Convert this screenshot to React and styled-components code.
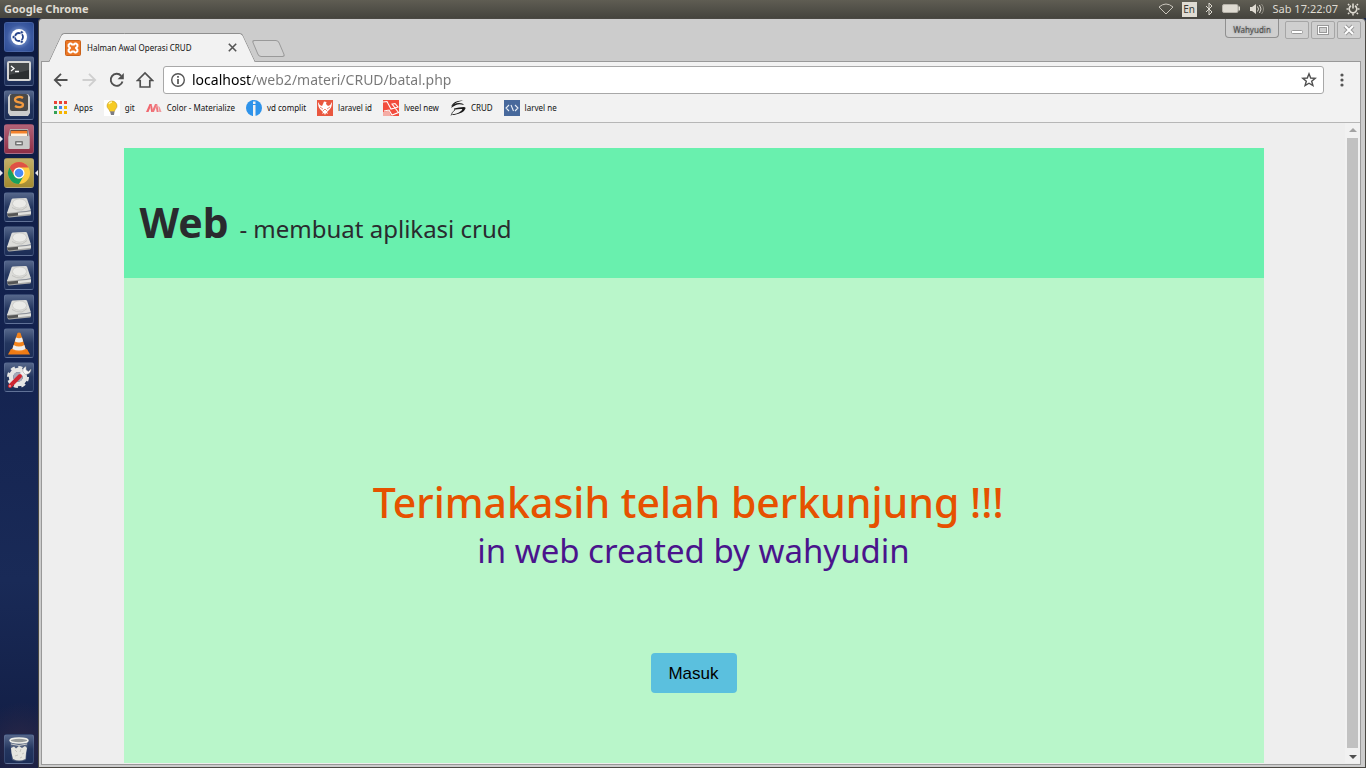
import React from 'react';
import styled, { createGlobalStyle, css } from 'styled-components';

const GlobalStyle = createGlobalStyle`
  * { box-sizing: border-box; }
  html, body { margin: 0; padding: 0; }
  body { font-family: "Noto Sans", "Open Sans", sans-serif; background: #14234a; }
  button, input { font-family: inherit; }
  a { color: inherit; text-decoration: none; }
  svg { display: block; flex: none; }
`;

const Desktop = styled.div`
  display: flex;
  flex-direction: column;
  height: 100vh;
  overflow: hidden;
`;

/* Top panel */
const Panel = styled.header`
  display: flex;
  align-items: center;
  justify-content: space-between;
  flex: none;
  height: 18px;
  padding: 0 6px 0 4px;
  background: linear-gradient(#5f5d53, #45443e);
  color: #dfdbd2;
  font-size: 11px;
  line-height: 16px;
`;

const PanelTitle = styled.strong`
  font-weight: 700;
`;

const Indicators = styled.div`
  display: flex;
  align-items: center;
  gap: 8px;
`;

const Language = styled.span`
  width: 15px;
  height: 15px;
  background: #dfdbd2;
  color: #3c3b37;
  font-size: 10px;
  line-height: 15px;
  text-align: center;
`;

const Clock = styled.time``;

const Workspace = styled.div`
  display: flex;
  flex: 1;
  min-height: 0;
`;

/* Launcher */
const Launcher = styled.nav`
  display: flex;
  flex-direction: column;
  flex: none;
  gap: 4px;
  width: 38px;
  padding: 4px;
  background:
    radial-gradient(circle at 22px 728px, #2b2746 0, transparent 44px),
    linear-gradient(#0d1a40, #142350 45%, #192a57 75%, #111c42);
`;

const Tile = styled.button`
  position: relative;
  display: flex;
  align-items: center;
  justify-content: center;
  flex: none;
  width: 30px;
  height: 30px;
  padding: 0;
  border: 1px solid rgba(140, 160, 200, 0.22);
  border-radius: 3px;
  background: ${(p) => p.$tint || 'linear-gradient(#56678b, #24365f 50%, #1c2d57)'};
  ${(p) => p.$last && css`margin-top: auto;`}
  ${(p) => p.$running && css`
    &::before {
      content: '';
      position: absolute;
      left: -5px;
      top: 11px;
      border: 3px solid transparent;
      border-left-color: #e8e8f0;
      border-right: 0;
    }
  `}
  ${(p) => p.$active && css`
    &::after {
      content: '';
      position: absolute;
      right: -5px;
      top: 11px;
      border: 3px solid transparent;
      border-right-color: #e8e8f0;
      border-left: 0;
    }
  `}
`;

/* Browser window */
const Window = styled.section`
  display: flex;
  flex-direction: column;
  flex: 1;
  min-width: 0;
  padding: 0 4px 2px 2px;
  border: 1px solid #4a4843;
  border-radius: 4px 4px 0 0;
  background: #cccccc;
`;

const TitleBar = styled.div`
  display: flex;
  justify-content: space-between;
  flex: none;
  height: 42px;
  padding-left: 8px;
`;

const TabStrip = styled.div`
  display: flex;
  align-items: flex-end;
`;

const Tab = styled.div`
  position: relative;
  z-index: 1;
  display: flex;
  align-items: center;
  width: 206px;
  height: 29px;
  margin-bottom: -1px;
  padding: 0 16px;
  font-size: 8px;
  line-height: 16px;

  &::before, &::after {
    content: '';
    position: absolute;
    z-index: -1;
    top: 0;
    bottom: 0;
    border-top: 1px solid #8f8f8f;
    background: #f2f2f2;
  }
  &::before {
    left: 6px;
    right: 50%;
    border-left: 1px solid #8f8f8f;
    border-top-left-radius: 3px;
    transform: skewX(-25deg);
  }
  &::after {
    left: 40%;
    right: 6px;
    border-right: 1px solid #8f8f8f;
    border-top-right-radius: 3px;
    transform: skewX(25deg);
  }
`;

const TabTitle = styled.span`
  flex: 1;
  margin-left: 6px;
  color: #111;
  white-space: nowrap;
`;

const IconButton = styled.button`
  display: flex;
  align-items: center;
  justify-content: center;
  flex: none;
  width: ${(p) => p.$size || 20}px;
  height: ${(p) => p.$size || 20}px;
  padding: 0;
  border: 0;
  background: none;
  color: ${(p) => (p.$muted ? '#cfcfcf' : '#505050')};
`;

const NewTab = styled.button`
  width: 27px;
  height: 17px;
  margin: 0 0 4px 0;
  padding: 0;
  border: 1px solid #999;
  border-radius: 3px;
  background: #d2d2d2;
  transform: skewX(23deg);
`;

const WindowControls = styled.div`
  display: flex;
  align-items: flex-start;
  gap: 2px;
`;

const Profile = styled.button`
  width: 54px;
  height: 19px;
  margin-right: 4px;
  padding: 3px 0 0;
  border: 1px solid #909090;
  border-top: 0;
  border-radius: 0 0 4px 4px;
  background: #cfcfcf;
  color: #4c4c4c;
  font-size: 8px;
  line-height: 14px;
  text-shadow: 0 0 2px #777;
`;

const Control = styled.button`
  display: flex;
  align-items: center;
  justify-content: center;
  width: 24px;
  height: 18px;
  margin-top: 2px;
  padding: 0;
  border: 1px solid #a6a6a6;
  border-radius: 2px;
  background: #cfcfcf;
`;

const Browser = styled.div`
  display: flex;
  flex-direction: column;
  flex: 1;
  min-height: 0;
  border: 1px solid #999;
  background: #f2f2f2;
`;

const Toolbar = styled.div`
  display: flex;
  align-items: center;
  flex: none;
  gap: 8px;
  padding: 4px 8px 4px 9px;
`;

const AddressBar = styled.label`
  display: flex;
  align-items: center;
  flex: 1;
  height: 28px;
  gap: 6px;
  padding: 0 6px;
  border: 1px solid #a8a8a8;
  border-radius: 3px;
  background: #fff;
`;

const Address = styled.input`
  flex: 1;
  min-width: 0;
  height: 22px;
  padding: 0;
  border: 0;
  outline: 0;
  color: #777;
  font-size: 14px;
  line-height: 22px;
  background: linear-gradient(90deg, #000 59px, #777 59px);
  background-clip: text;
  -webkit-background-clip: text;
  -webkit-text-fill-color: transparent;
`;

const Bookmarks = styled.nav`
  display: flex;
  flex: none;
  gap: 11px;
  padding: 2px 11px 6px;
  border-bottom: 1px solid #b6b6b6;
`;

const Bookmark = styled.a`
  display: flex;
  align-items: center;
  gap: 5px;
  color: #111;
  font-size: 8px;
  line-height: 16px;
  white-space: nowrap;
`;

const Viewport = styled.div`
  display: flex;
  flex: 1;
  min-height: 0;
  padding-bottom: 1px;
  background: #eeeeee;
`;

const Page = styled.main`
  display: flex;
  flex-direction: column;
  flex: 1;
  max-width: 1140px;
  margin: 25px auto 0;
  background: #b9f6ca;
  overflow: hidden;
`;

const Banner = styled.header`
  flex: none;
  height: 130px;
  padding: 44px 16px 0;
  background: #69f0ae;
  color: #2a2a2e;
`;

const BannerTitle = styled.h1`
  margin: 0;
  font-size: 41px;
  font-weight: 700;
  line-height: 60px;
`;

const BannerNote = styled.small`
  font-size: 24px;
  font-weight: 400;
`;

const Farewell = styled.section`
  display: flex;
  flex-direction: column;
  align-items: center;
  padding-top: 196px;
`;

const Thanks = styled.h2`
  margin: 0;
  color: #e65100;
  font-size: 41px;
  font-weight: 500;
  line-height: 56px;
`;

const Author = styled.p`
  margin: 0;
  color: #4a148c;
  font-size: 33px;
  line-height: 42px;
`;

const EnterButton = styled.button`
  width: 86px;
  height: 40px;
  margin-top: 81px;
  padding: 2px 0 0;
  border: 0;
  border-radius: 4px;
  background: #5bc0de;
  color: #000;
  font-family: "Liberation Sans", Arial, sans-serif;
  font-size: 17px;
  line-height: 38px;
`;

const ScrollBar = styled.div`
  display: flex;
  flex-direction: column;
  align-items: center;
  flex: none;
  gap: 2px;
  width: 15px;
  background: #f1f1f1;
`;

const ScrollArrow = styled.button`
  display: flex;
  align-items: center;
  justify-content: center;
  width: 15px;
  height: 13px;
  padding: 0;
  border: 0;
  background: none;
`;

const ScrollThumb = styled.div`
  flex: 1;
  width: 11px;
  background: #c1c1c1;
`;

/* Launcher drawings */
const UbuntuIcon = () => (
  <svg width="20" height="20" viewBox="0 0 20 20">
    <circle cx="10" cy="10" r="8" fill="#fff" />
    <circle cx="10" cy="10" r="4" fill="none" stroke="#26448c" strokeWidth="1.8" strokeDasharray="7.2 1.18" strokeDashoffset="3.6" />
    <circle cx="4.6" cy="10" r="1.5" fill="#26448c" stroke="#fff" strokeWidth=".5" />
    <circle cx="12.7" cy="5.3" r="1.5" fill="#26448c" stroke="#fff" strokeWidth=".5" />
    <circle cx="12.7" cy="14.7" r="1.5" fill="#26448c" stroke="#fff" strokeWidth=".5" />
  </svg>
);

const TerminalIcon = () => (
  <svg width="26" height="24" viewBox="0 0 26 24">
    <rect x="2" y="3" width="22" height="18" rx="1" fill="#2b2e30" stroke="#d5d5d5" strokeWidth="2" />
    <path d="M3 4h20v7L3 16z" fill="#565a5c" opacity=".6" />
    <path d="M5 7l3 2.5L5 12M9 12.5h4" fill="none" stroke="#fff" strokeWidth="1.3" />
  </svg>
);

const SublimeIcon = () => (
  <svg width="26" height="26" viewBox="0 0 26 26">
    <path d="M2 5l2-3h18l2 3v16l-2 3H4l-2-3z" fill="#ccc" />
    <rect x="4" y="2" width="18" height="17" rx="2" fill="#494949" />
    <path d="M17 6c-3-2-8-1-8 1.800 0 3.700 8 1.700 8 4.900 0 2.700-5 3.300-8 1.300" fill="none" stroke="#f29a3f" strokeWidth="2.300" />
  </svg>
);

const FilesIcon = () => (
  <svg width="24" height="24" viewBox="0 0 24 24">
    <path d="M3 2h18l1.500 7v12.500H1.500V9z" fill="#b4b4b4" />
    <path d="M3.500 3h17v6h-17z" fill="#6f4a38" />
    <path d="M4 4h16v3H4z" fill="#f5812a" />
    <path d="M4 6.500h16V9H4z" fill="#fff0dc" />
    <rect x="1.500" y="9" width="21" height="13" rx="1" fill="#c9c9c9" />
    <rect x="8" y="14" width="8" height="4.500" rx="1" fill="#767676" />
    <path d="M9.500 15.500h5v1.500h-5z" fill="#eee" />
  </svg>
);

const ChromeIcon = () => (
  <svg width="24" height="24" viewBox="0 0 24 24">
    <circle cx="12" cy="12" r="11" fill="#ffcd41" />
    <path d="M2.470 6.500A11 11 0 0 1 21.530 6.500H12A5.500 5.500 0 0 0 7.240 14.750z" fill="#de5246" />
    <path d="M2.470 6.500L7.240 14.750A5.500 5.500 0 0 0 16.760 14.750L12 23A11 11 0 0 1 2.470 6.500z" fill="#17a05e" />
    <circle cx="12" cy="12" r="5.500" fill="#fff" />
    <circle cx="12" cy="12" r="4.300" fill="#4a8af4" />
  </svg>
);

const DriveIcon = () => (
  <svg width="26" height="24" viewBox="0 0 26 24">
    <path d="M1 17l.5 4q.2 1.500 2 1.500l20.500-2q1-.2 1-1.500v-3z" fill="#a9a9a7" />
    <path d="M5.500 4.500Q6 3.500 7 3.500L19.500 3q1.300 0 1.600 1L25 15.500 1 18z" fill="#dcdcd9" />
    <ellipse cx="13.500" cy="8.500" rx="7" ry="4.600" fill="#ebebe8" stroke="#c6c6c3" strokeWidth=".7" />
    <path d="M6 12.500q4 3 10 2.500l5-3.500" fill="none" stroke="#bdbdb9" strokeWidth=".8" />
    <path d="M1.200 18.800l11-1v2.700l-9 1q-1.700 0-2-2.700z" fill="#555" />
    <path d="M12 18l13-1.500v2.300l-13 1.500z" fill="#e2e2df" />
  </svg>
);

const VlcIcon = () => (
  <svg width="24" height="25" viewBox="0 0 24 25">
    <path d="M4 18h16l3 5.500H1z" fill="#ef7b15" />
    <path d="M10.500 2q1.500-1 3 0L19 19q-7 4-14 0z" fill="#f4841c" />
    <path d="M9 6.500q3 1.500 6 0l1.200 4q-4.200 2-8.400 0z" fill="#eee" />
    <path d="M6.600 14q5.400 3 10.800 0l1.200 4q-6.600 3-13.200 0z" fill="#eee" />
  </svg>
);

const SettingsIcon = () => (
  <svg width="26" height="26" viewBox="0 0 26 26">
    <circle cx="12" cy="13" r="7" fill="none" stroke="#e6e6e4" strokeWidth="4.500" />
    <circle cx="12" cy="13" r="9.800" fill="none" stroke="#e6e6e4" strokeWidth="2.500" strokeDasharray="4.200 3.500" />
    <circle cx="12" cy="13" r="4.800" fill="#a5abb9" />
    <path d="M13 13l6-6" stroke="#efefef" strokeWidth="3" />
    <path d="M17 8q-1-4 3-5.500V6l2.500 1.500L25 5q0 5-5.500 5.500z" fill="#f6f6f6" stroke="#9b9b9b" strokeWidth=".5" />
    <path d="M4 22L14 12" stroke="#ce2631" strokeWidth="4" strokeLinecap="round" />
    <circle cx="4" cy="22" r=".8" fill="#fff" />
  </svg>
);

const TrashIcon = () => (
  <svg width="22" height="26" viewBox="0 0 22 26">
    <path d="M2 4l2 20q7 3 14 0l2-20z" fill="#8790a1" opacity=".4" />
    <path d="M3 12l3-1.500 2 2 3-2.500 3 2 3-2 2 2-1 5-.5 6q-6.500 3-12.500 0L3.500 17z" fill="#e5e5df" />
    <path d="M7 14l2 2M13 13l-1 3M16 17l-2 1M7 20l3-1M12 22l2-1" fill="none" stroke="#c4c4be" />
    <ellipse cx="11" cy="4.500" rx="9" ry="2.500" fill="#989c9c" stroke="#f0f0ea" strokeWidth="1.500" />
    <path d="M3 8q8 3 16 0" fill="none" stroke="#c9cbc9" />
  </svg>
);

/* Panel indicators */
const WifiIcon = () => (
  <svg width="16" height="12" viewBox="0 0 16 12">
    <path d="M1 4Q8-2 15 4L8 11z" fill="none" stroke="#c9c5bc" />
  </svg>
);
const BluetoothIcon = () => (
  <svg width="8" height="14" viewBox="0 0 8 14">
    <path d="M1 4l6 6-3 3V1l3 3-6 6" fill="none" stroke="#dfdbd2" />
  </svg>
);
const BatteryIcon = () => (
  <svg width="20" height="12" viewBox="0 0 20 12">
    <rect x="1.500" y="1.500" width="15.500" height="8" rx="1.500" fill="#dfdbd2" stroke="#b5b1a8" />
    <path d="M17.500 3.500h1.500v4h-1.500z" fill="#dfdbd2" />
  </svg>
);
const SoundIcon = () => (
  <svg width="16" height="14" viewBox="0 0 16 14">
    <path d="M1 5h2l4-3v10L3 9H1z" fill="#dfdbd2" />
    <path d="M8.500 4.500q2 2.500 0 5M10.500 3q3 4 0 8" fill="none" stroke="#dfdbd2" />
    <path d="M12.500 2q4 5 0 10" fill="none" stroke="#908d83" />
  </svg>
);
const PowerIcon = () => (
  <svg width="14" height="14" viewBox="0 0 14 14">
    <path d="M5 3.800a3.800 3.800 0 1 0 4 0M7 1.500v5" fill="none" stroke="#dfdbd2" strokeWidth="1.600" />
    <path d="M3.300 3.300L2 2M10.700 3.300L12 2M2.500 7H.5M13.500 7h-2M3.300 10.700L2 12M10.700 10.700L12 12M7 11.500v2" stroke="#dfdbd2" strokeWidth="1.500" />
  </svg>
);

/* Browser drawings */
const XamppIcon = () => (
  <svg width="16" height="16" viewBox="0 0 16 16">
    <rect x=".5" y=".5" width="15" height="15" rx="1" fill="#ec7624" stroke="#c9621b" />
    <path d="M4.800 3.600h1.400L7 4.500h2l.8-.9h1.400l1.200 1.200v1.600L11 8l1.400 1.600v1.600l-1.200 1.200H9.800L9 11.500H7l-.8.9H4.800l-1.200-1.200V9.600L5 8 3.600 6.400V4.800z" fill="none" stroke="#fff" strokeWidth="2" strokeLinejoin="round" />
  </svg>
);
const CloseIcon = () => (
  <svg width="9" height="9" viewBox="0 0 9 9">
    <path d="M.8.8l7.400 7.400M8.200.8L.8 8.200" stroke="#555" strokeWidth="1.600" />
  </svg>
);
const Arrow = ({ flip }) => (
  <svg width="16" height="16" viewBox="0 0 16 16">
    <path d={flip ? 'M1.500 8h12M8 1.800L14.200 8 8 14.200' : 'M14.500 8h-12M8 1.800L1.800 8 8 14.200'} fill="none" stroke="currentColor" strokeWidth="1.800" />
  </svg>
);
const ReloadIcon = () => (
  <svg width="16" height="16" viewBox="0 0 16 16">
    <path d="M13.500 9.500A6 6 0 1 1 12.200 3.800" fill="none" stroke="currentColor" strokeWidth="1.900" />
    <path d="M14.800 1v6.200H8.600z" fill="currentColor" />
  </svg>
);
const HomeIcon = () => (
  <svg width="18" height="18" viewBox="0 0 18 18">
    <path d="M1.500 9.500L9 2l7.500 7.500h-2.700V16H4.200V9.500z" fill="none" stroke="currentColor" strokeWidth="1.700" />
  </svg>
);
const InfoIcon = () => (
  <svg width="16" height="16" viewBox="0 0 16 16">
    <circle cx="8" cy="8" r="6.300" fill="none" stroke="#555" strokeWidth="1.400" />
    <path d="M8 4v1.700M8 7v5" stroke="#555" strokeWidth="1.700" />
  </svg>
);
const StarIcon = () => (
  <svg width="16" height="16" viewBox="0 0 16 16">
    <path d="M8 1.800l1.700 4.200 4.500.3-3.500 2.900 1.200 4.400L8 11.200l-3.900 2.400 1.200-4.400L1.800 6.300 6.300 6z" fill="none" stroke="#505050" strokeWidth="1.400" />
  </svg>
);
const MenuIcon = () => (
  <svg width="4" height="14" viewBox="0 0 4 14" fill="#555">
    <circle cx="2" cy="2" r="1.600" /><circle cx="2" cy="7" r="1.600" /><circle cx="2" cy="12" r="1.600" />
  </svg>
);

const appColors = ['#ea4335', '#ea4335', '#ea4335', '#34a056', '#4285f4', '#f5b400', '#34a056', '#f5b400', '#f5b400'];

const bookmarks = [
  { label: 'Apps', icon: appColors.map((c, i) => <rect key={i} x={1 + (i % 3) * 5} y={1 + Math.floor(i / 3) * 5} width="3" height="3" fill={c} />) },
  { label: 'git', icon: <>
    <path d="M0 0h16v16H0z" fill="#fff" />
    <path d="M8 1a5 5 0 0 1 5 5c0 2.500-2.200 3-2.600 5.500H5.800C5.500 9 3 8.500 3 6a5 5 0 0 1 5-5z" fill="#f7cc25" stroke="#b78b17" strokeWidth=".5" />
    <path d="M5 4q1-2 3-2" fill="none" stroke="#fff6b0" strokeWidth="1.500" />
    <path d="M6 11.500h4.500L10 15H7z" fill="#7d7d85" />
  </> },
  { label: 'Color - Materialize', icon: <>
    <path d="M0 12L3.500 4h2.200L2.500 12zM5.700 4l1.500 8h-2L4.500 8z" fill="#f0686f" />
    <path d="M5.500 12L9 4h2.200L8 12zM11.200 4l1.500 8h-2L10 8z" fill="#ef777d" />
    <path d="M12.200 6l1.500 1 1.800 5h-2.200z" fill="#f0989d" />
  </> },
  { label: 'vd complit', icon: <>
    <circle cx="8" cy="8" r="8" fill="#2e93ea" />
    <path d="M7 5h2.500v11H7zM7 1.500h2.500V4H7z" fill="#f2f2f2" />
    <path d="M6.500 0v16" stroke="#2e93ea" />
  </> },
  { label: 'laravel id', icon: <>
    <path d="M0 0h16v16H0z" fill="#e9573f" />
    <path d="M1 2q1 3 4 4l1-2 1-2.500 2.500.5L9 4l2 2q3-1 4-4 0 5-2 7l-3 3 1 2-2-1-1 2-1-2-2 1 1-2-3-3Q1 7 1 2z" fill="#fff" />
    <path d="M3 7l3 2M13 7l-3 2M6 11l2-2 2 2" fill="none" stroke="#e9573f" strokeWidth=".7" />
  </> },
  { label: 'lveel new', icon: <>
    <path d="M0 0h16v16H0z" fill="#f24d3e" />
    <path d="M0 2l4-.5 4 7.500 7-2-3-3.500-3 .7 6.500 8.300L9 15l-3-5-5 1" fill="none" stroke="#fff" strokeWidth="1.100" />
    <path d="M0 12l6-1.500 2 5.500H0z" fill="#f6d6d2" opacity=".7" />
  </> },
  { label: 'CRUD', icon: <>
    <path d="M13 .5Q4 0 1 6.500l2-1Q5 2 13 .5z" fill="#1a1a1a" />
    <path d="M1 8q2-5 8-5 4 0 5 2-5-1.500-8 0-3 1.500-5 3z" fill="#1a1a1a" />
    <path d="M4 8.500q5-1.500 10-1.500 2 0 1.500 1.500Q14 13 4 15q-2 .3-2-.7 5 0 9-3.300 2-1.700 1-2-3-.3-8 .7z" fill="#1a1a1a" />
    <path d="M1 15.500q1-4 4-5.500" fill="none" stroke="#555" />
  </> },
  { label: 'larvel ne', icon: <>
    <path d="M0 0h16v16H0z" fill="#48699c" />
    <path d="M5 5L2 8l3 3M11 5l3 3-3 3M7 5l2.500 6" fill="none" stroke="#e9eef5" strokeWidth="1.100" />
  </> },
];

const drives = ['Volume 1', 'Volume 2', 'Volume 3', 'Volume 4'];

export default function App() {
  return (
    <Desktop>
      <GlobalStyle />
      <Panel>
        <PanelTitle>Google Chrome</PanelTitle>
        <Indicators>
          <WifiIcon />
          <Language>En</Language>
          <BluetoothIcon />
          <BatteryIcon />
          <SoundIcon />
          <Clock>Sab 17:22:07</Clock>
          <PowerIcon />
        </Indicators>
      </Panel>
      <Workspace>
        <Launcher aria-label="Launcher">
          <Tile aria-label="Search" $tint="radial-gradient(circle, #7b97d0 25%, #3d5ba2 60%, #2b4a93)"><UbuntuIcon /></Tile>
          <Tile aria-label="Terminal"><TerminalIcon /></Tile>
          <Tile aria-label="Sublime Text"><SublimeIcon /></Tile>
          <Tile aria-label="Files" $running $tint="linear-gradient(#b26277, #8e2f46)"><FilesIcon /></Tile>
          <Tile aria-label="Google Chrome" $running $active $tint="linear-gradient(#c3b067, #a48b30)"><ChromeIcon /></Tile>
          {drives.map((name) => <Tile key={name} aria-label={name}><DriveIcon /></Tile>)}
          <Tile aria-label="VLC"><VlcIcon /></Tile>
          <Tile aria-label="Settings"><SettingsIcon /></Tile>
          <Tile aria-label="Trash" $last><TrashIcon /></Tile>
        </Launcher>
        <Window>
          <TitleBar>
            <TabStrip>
              <Tab>
                <XamppIcon />
                <TabTitle>Halman Awal Operasi CRUD</TabTitle>
                <IconButton aria-label="Close tab" $size={14}><CloseIcon /></IconButton>
              </Tab>
              <NewTab aria-label="New tab" />
            </TabStrip>
            <WindowControls>
              <Profile>Wahyudin</Profile>
              <Control aria-label="Minimize">
                <svg width="12" height="10" viewBox="0 0 12 10"><rect x=".5" y="5.500" width="11" height="3" rx="1" fill="#fff" stroke="#999" /></svg>
              </Control>
              <Control aria-label="Maximize">
                <svg width="12" height="10" viewBox="0 0 12 10"><rect x="1.500" y="1.500" width="9" height="7" fill="none" stroke="#999" strokeWidth="3" /><rect x="1.500" y="1.500" width="9" height="7" fill="none" stroke="#fff" /></svg>
              </Control>
              <Control aria-label="Close">
                <svg width="12" height="12" viewBox="0 0 12 12"><path d="M2 2l8 8M10 2l-8 8" stroke="#999" strokeWidth="4" /><path d="M2 2l8 8M10 2l-8 8" stroke="#fff" strokeWidth="2" /></svg>
              </Control>
            </WindowControls>
          </TitleBar>
          <Browser>
            <Toolbar>
              <IconButton aria-label="Back"><Arrow /></IconButton>
              <IconButton aria-label="Forward" $muted><Arrow flip /></IconButton>
              <IconButton aria-label="Reload"><ReloadIcon /></IconButton>
              <IconButton aria-label="Home"><HomeIcon /></IconButton>
              <AddressBar>
                <InfoIcon />
                <Address aria-label="Address" defaultValue="localhost/web2/materi/CRUD/batal.php" />
                <StarIcon />
              </AddressBar>
              <IconButton aria-label="Menu"><MenuIcon /></IconButton>
            </Toolbar>
            <Bookmarks aria-label="Bookmarks">
              {bookmarks.map(({ label, icon }) => (
                <Bookmark key={label} href="#">
                  <svg width="16" height="16" viewBox="0 0 16 16">{icon}</svg>
                  {label}
                </Bookmark>
              ))}
            </Bookmarks>
            <Viewport>
              <Page>
                <Banner>
                  <BannerTitle>Web <BannerNote>- membuat aplikasi crud</BannerNote></BannerTitle>
                </Banner>
                <Farewell>
                  <Thanks>Terimakasih telah berkunjung !!!&nbsp;</Thanks>
                  <Author>in web created by wahyudin</Author>
                  <EnterButton>Masuk</EnterButton>
                </Farewell>
              </Page>
              <ScrollBar>
                <ScrollArrow aria-label="Scroll up">
                  <svg width="8" height="4" viewBox="0 0 8 4"><path d="M0 4l4-4 4 4z" fill="#a3a3a3" /></svg>
                </ScrollArrow>
                <ScrollThumb />
                <ScrollArrow aria-label="Scroll down">
                  <svg width="8" height="4" viewBox="0 0 8 4"><path d="M0 0l4 4 4-4z" fill="#505050" /></svg>
                </ScrollArrow>
              </ScrollBar>
            </Viewport>
          </Browser>
        </Window>
      </Workspace>
    </Desktop>
  );
}
